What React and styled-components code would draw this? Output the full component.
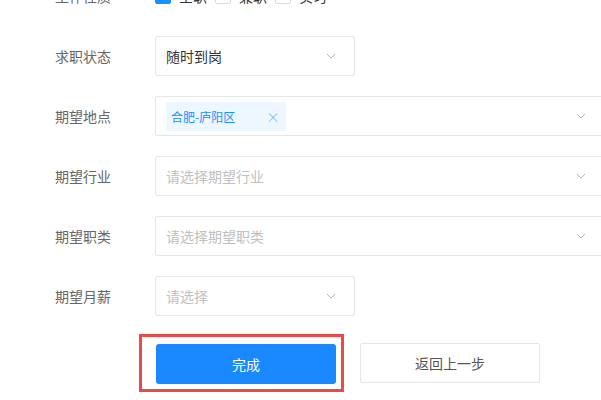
import styled, { createGlobalStyle } from "styled-components";

const GlobalStyle = createGlobalStyle`
    html, body {
        margin: 0;
        padding: 0;
        background: #fff;
        overflow: hidden;
        font-family: "Noto Sans CJK SC", "Noto Sans", sans-serif;
    }
`

function Chevron(){
    return(
        <svg width="10" height="6" viewBox="0 0 10 6">
            <polyline points="1,1 5,5 9,1" fill="none" stroke="#b8b8b8" strokeWidth="1" />
        </svg>
    )
}

function Check(){
    return(
        <svg width="10" height="8" viewBox="0 0 10 8">
            <polyline points="1,4 4,7 9,1" fill="none" stroke="#fff" strokeWidth="1.6" />
        </svg>
    )
}

export default function App(){
    const jobTypes = [
        { name: '全职', checked: true },
        { name: '兼职', checked: false },
        { name: '实习', checked: false },
    ];

    return(
        <>
            <GlobalStyle />
            <Form>
                <Row>
                    <Label>工作性质</Label>
                    <Options>
                        {jobTypes.map((t)=>
                            <Option key={t.name}>
                                <Box checked={t.checked}>{t.checked && <Check />}</Box>
                                {t.name}
                            </Option>
                        )}
                    </Options>
                </Row>
                <Row>
                    <Label>求职状态</Label>
                    <Select>
                        <Value>随时到岗</Value>
                        <Chevron />
                    </Select>
                </Row>
                <Row>
                    <Label>期望地点</Label>
                    <Select wide>
                        <Tag>
                            合肥-庐阳区
                            <Close>×</Close>
                        </Tag>
                        <Chevron />
                    </Select>
                </Row>
                <Row>
                    <Label>期望行业</Label>
                    <Select wide>
                        <Value placeholder>请选择期望行业</Value>
                        <Chevron />
                    </Select>
                </Row>
                <Row>
                    <Label>期望职类</Label>
                    <Select wide>
                        <Value placeholder>请选择期望职类</Value>
                        <Chevron />
                    </Select>
                </Row>
                <Row>
                    <Label>期望月薪</Label>
                    <Select>
                        <Value placeholder>请选择</Value>
                        <Chevron />
                    </Select>
                </Row>
                <Buttons>
                    <Highlight>
                        <Submit>完成</Submit>
                    </Highlight>
                    <Back>返回上一步</Back>
                </Buttons>
            </Form>
        </>
    )
}

const Form = styled.div`
    display: flex;
    flex-direction: column;
    gap: 20px;
    margin-top: -24px;
    width: 601px;
`

const Row = styled.div`
    display: flex;
    align-items: center;
    height: 40px;
    padding-left: 55px;
`

const Label = styled.div`
    width: 100px;
    flex-shrink: 0;
    font-size: 14px;
    color: #666;
`

const Options = styled.div`
    display: flex;
`

const Option = styled.label`
    width: 60px;
    display: flex;
    align-items: center;
    gap: 8px;
    font-size: 14px;
    color: #333;
`

const Box = styled.span`
    width: 16px;
    height: 16px;
    box-sizing: border-box;
    border-radius: 2px;
    border: 1px solid ${props => (props.checked ? "#1890ff" : "#d9d9d9")};
    background-color: ${props => (props.checked ? "#1890ff" : "#fff")};
    display: flex;
    justify-content: center;
    align-items: center;
`

const Select = styled.div`
    box-sizing: border-box;
    width: ${props => (props.wide ? "450px" : "200px")};
    flex-shrink: 0;
    height: 40px;
    border: 1px solid #e6e6e6;
    border-radius: 2px;
    display: flex;
    align-items: center;
    justify-content: space-between;
    padding: 0 18px 0 10px;
`

const Value = styled.span`
    font-size: 14px;
    color: ${props => (props.placeholder ? "#c0c0c0" : "#333")};
`

const Tag = styled.span`
    display: flex;
    align-items: center;
    justify-content: space-between;
    width: 120px;
    height: 29px;
    box-sizing: border-box;
    padding: 0 6px 0 5px;
    background-color: #eef6ff;
    color: #1890ff;
    font-size: 12px;
    border-radius: 2px;
`

const Close = styled.span`
    font-size: 14px;
    font-weight: 300;
    color: #7ab3ee;
`

const Buttons = styled.div`
    display: flex;
    align-items: center;
    gap: 16px;
    padding-left: 139px;
    margin-top: -2px;
`

const Highlight = styled.div`
    border: 3px solid #ea4a4a;
    padding: 7px 5px 5px 14px;
`

const Submit = styled.button`
    width: 180px;
    height: 40px;
    border: none;
    border-radius: 3px;
    background-color: #1a88ff;
    color: #fff;
    font-family: "Noto Sans CJK SC", sans-serif;
    font-size: 14px;
    cursor: pointer;
`

const Back = styled.button`
    width: 180px;
    height: 40px;
    box-sizing: border-box;
    border: 1px solid #e6e6e6;
    border-radius: 2px;
    background-color: #fff;
    color: #555;
    font-family: "Noto Sans CJK SC", sans-serif;
    font-size: 14px;
    cursor: pointer;
`
